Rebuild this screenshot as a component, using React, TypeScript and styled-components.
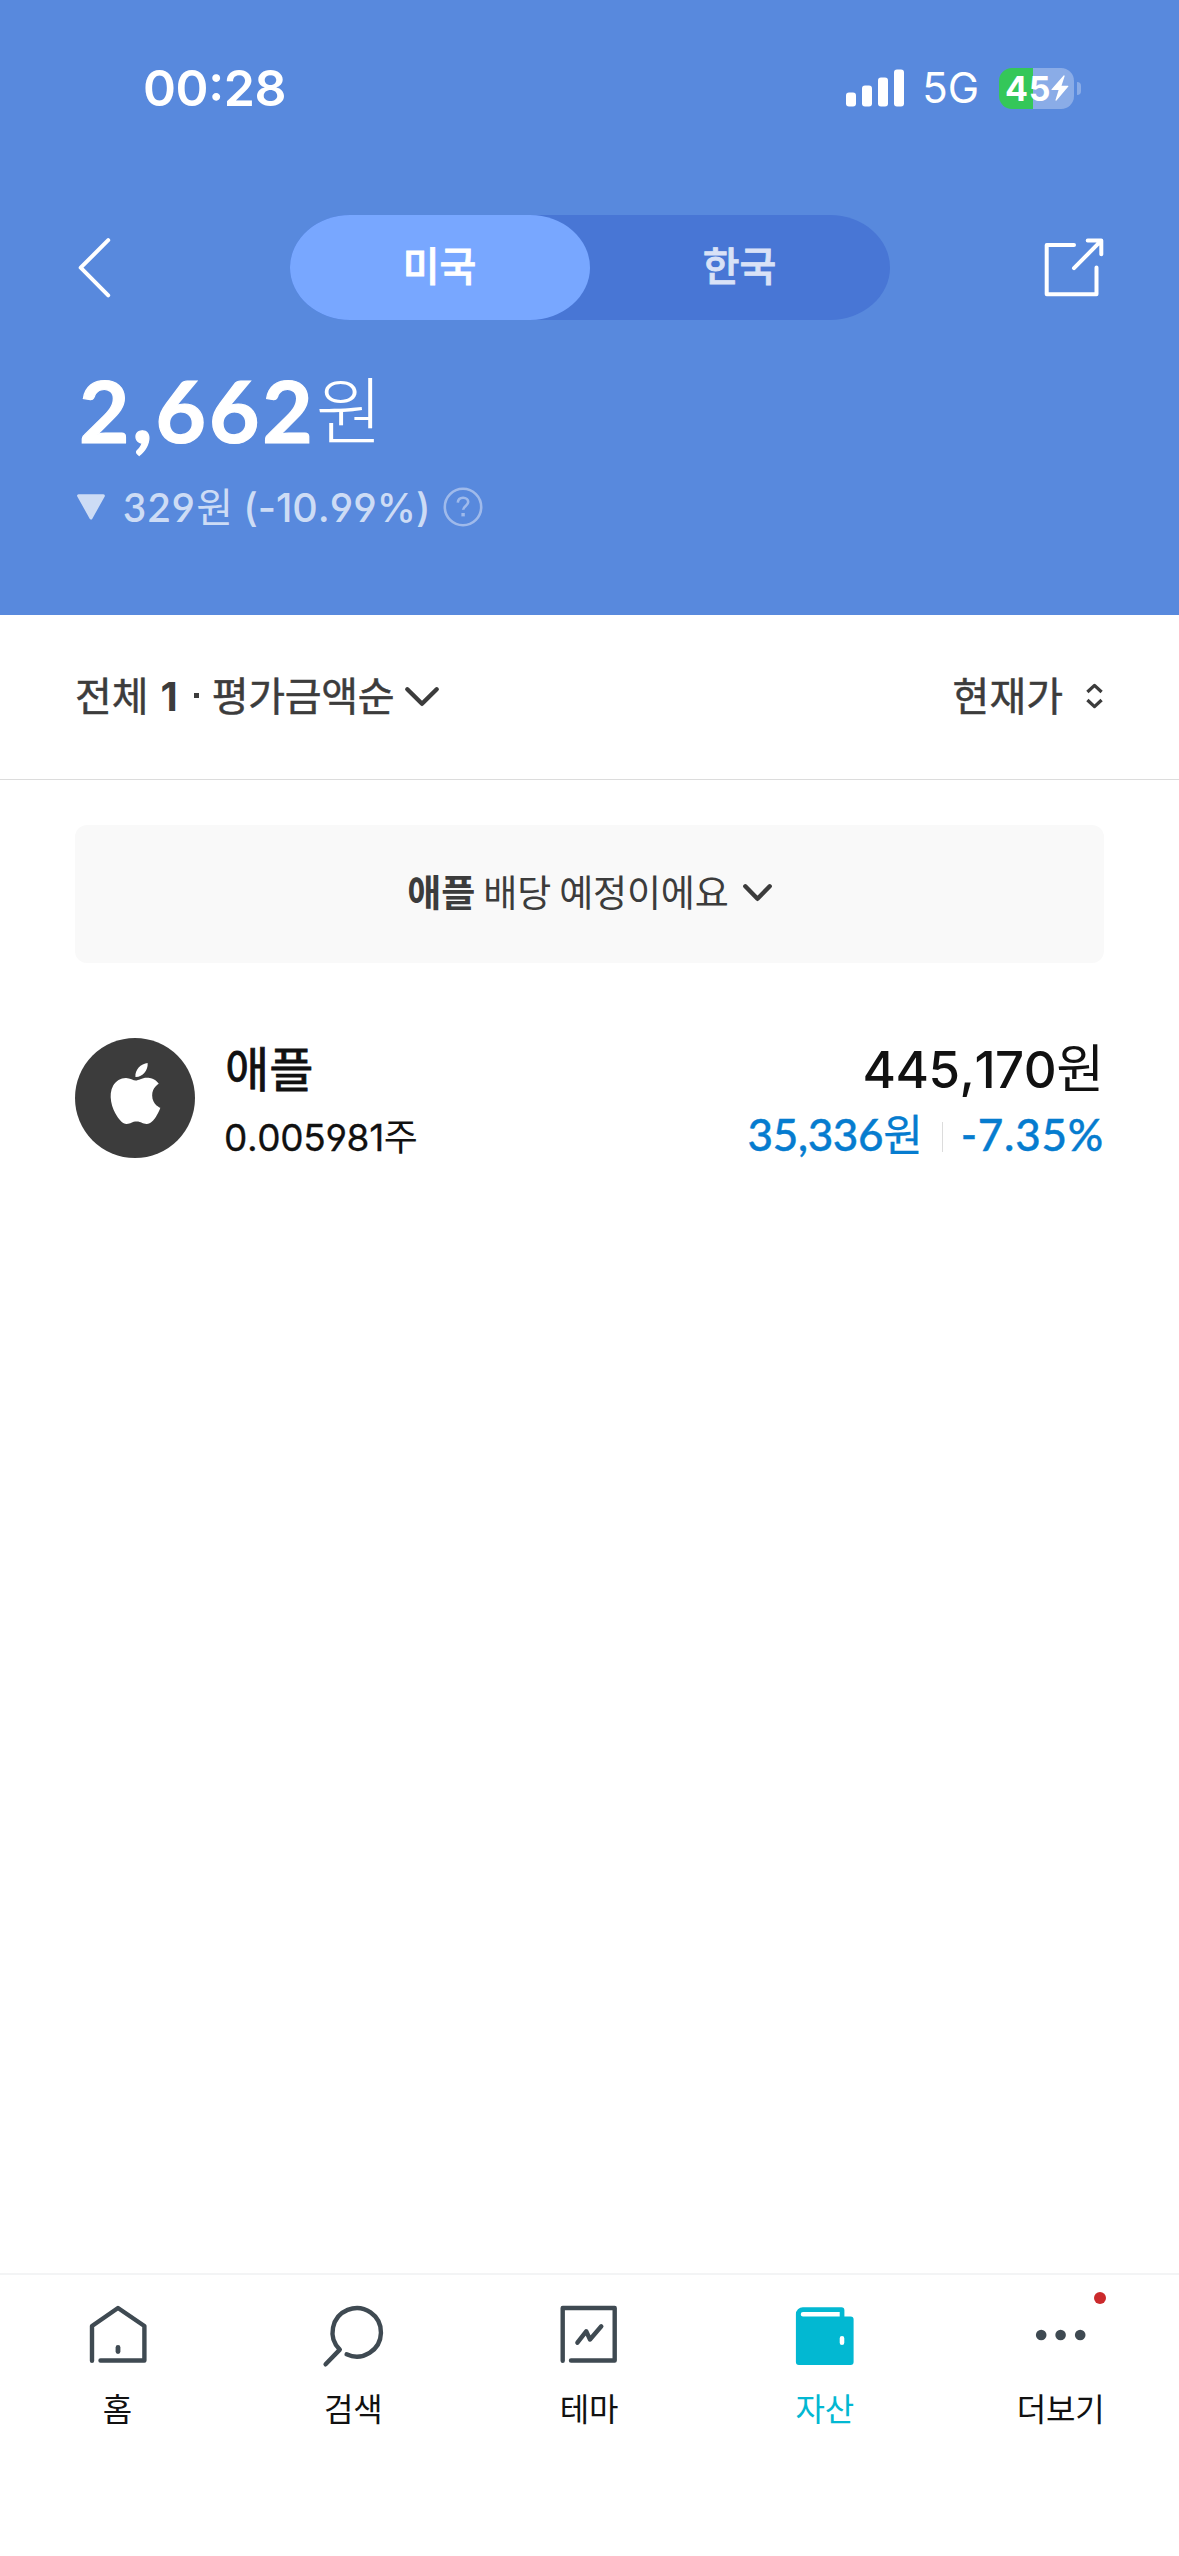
import React from 'react';
import styled, { createGlobalStyle } from 'styled-components';
import { SiApple } from 'react-icons/si';

const KO = '"Noto Sans CJK KR", sans-serif';
const ROUND = 'Lato, "Noto Sans CJK KR", sans-serif';
const GROTESK = 'Inter, "Noto Sans CJK KR", sans-serif';

const GlobalStyle = createGlobalStyle`
  * { box-sizing: border-box; }
  body { margin: 0; background: #fff; font-family: ${KO}; -webkit-font-smoothing: antialiased; }
  svg { display: block; flex: none; overflow: visible; }
  button { appearance: none; border: 0; padding: 0; margin: 0; background: none; font: inherit; color: inherit; }
`;

const Screen = styled.div`
  display: flex;
  flex-direction: column;
  width: 1179px;
  height: 2556px;
  overflow: hidden;
  background: #fff;
  color: #111;
`;

/* Inline run of text with its own face, kept on the baseline of its line */
const Run = styled.span<{
  $face?: string;
  $size: number;
  $weight?: number;
  $track?: number;
  $raise?: number;
  $bolder?: number;
}>`
  font-family: ${p => p.$face ?? KO};
  font-size: ${p => p.$size}px;
  font-weight: ${p => p.$weight ?? 400};
  letter-spacing: ${p => p.$track ?? 0}px;
  line-height: 0;
  vertical-align: ${p => p.$raise ?? 0}px;
  font-kerning: ${p => (p.$face === GROTESK ? 'none' : 'auto')};
  font-feature-settings: 'cv03', 'cv04';
  -webkit-text-stroke: ${p => p.$bolder ?? 0}px currentColor;
`;

const Header = styled.header`
  display: flex;
  flex-direction: column;
  flex: none;
  height: 615px;
  background: #5889dd;
  color: #fff;
`;

const StatusBar = styled.div`
  display: flex;
  justify-content: space-between;
  height: 215px;
  padding: 58px 98px 0 143px;
`;

const Clock = styled.div`
  font: 600 50px/60px ${GROTESK};
  letter-spacing: -0.4px;
  font-feature-settings: 'case';
`;

const StatusIcons = styled.div`
  display: flex;
  align-items: center;
  height: 60px;
`;

const Network = styled.span`
  margin: 0 20px 0 18px;
  font: 400 42px/62px ${GROTESK};
`;

const Battery = styled.div`
  display: flex;
  align-items: center;
  width: 75px;
  height: 41px;
  padding-left: 6px;
  border-radius: 13px;
  background: linear-gradient(90deg, #34c759 34px, #8aace7 34px);
`;

const BatteryLevel = styled.span`
  font: 700 34px/41px ${GROTESK};
  letter-spacing: 0.8px;
`;

const BatteryTip = styled.i`
  width: 4px;
  height: 13px;
  margin-left: 3px;
  border-radius: 0 5px 5px 0;
  background: #8aace7;
`;

const Toolbar = styled.div`
  display: flex;
  align-items: center;
  justify-content: space-between;
  height: 105px;
  padding: 0 75px;
`;

const Segments = styled.div`
  display: flex;
  width: 600px;
  height: 105px;
  border-radius: 60px / 52.5px;
  background: #4876d5;
`;

const Segment = styled.button<{ $active?: boolean }>`
  flex: 1;
  padding-bottom: 7px;
  border-radius: 60px / 52.5px;
  background: ${p => (p.$active ? '#78a7ff' : 'transparent')};
  color: ${p => (p.$active ? '#fff' : '#d9e2f7')};
  font: 500 40px/60px ${KO};
  -webkit-text-stroke: 0.8px currentColor;
`;

const Total = styled.div`
  height: 100px;
  margin: 40px 0 0 79px;
  font: 700 87px/100px ${ROUND};
`;

const Change = styled.div`
  display: flex;
  align-items: center;
  height: 50px;
  margin: 22px 0 0 76px;
  color: #cddcf5;
`;

const ChangeText = styled.div`
  margin: 0 13px 0 17px;
  font: 500 40px/50px ${ROUND};
  white-space: pre;
`;

const FilterBar = styled.div`
  display: flex;
  flex: none;
  align-items: center;
  justify-content: space-between;
  height: 165px;
  padding: 0 75px 6px;
  border-bottom: 1px solid #dcdcdc;
  color: #3c3c3c;
  font: 400 40px/60px ${KO};
  -webkit-text-stroke: 0.5px currentColor;
`;

const FilterGroup = styled.button`
  display: flex;
  align-items: center;
`;

const Count = styled.span`
  margin: 0 16px 0 12px;
  padding-top: 6px;
  font: 700 40px/60px ${GROTESK};
  -webkit-text-stroke: 0;
`;

const Dot = styled.i`
  width: 5px;
  height: 5px;
  margin: 3px 13px 0 0;
  background: #3c3c3c;
`;

const SortLabel = styled.span`
  letter-spacing: -0.3px;
`;

const IconSlot = styled.span<{ $gap: number; $drop: number }>`
  display: block;
  margin-left: ${p => p.$gap}px;
  padding-top: ${p => p.$drop}px;
`;

const Content = styled.main`
  flex: 1;
  padding: 45px 75px 0;
`;

const Banner = styled.button`
  display: flex;
  align-items: center;
  justify-content: center;
  width: 1029px;
  height: 138px;
  padding-bottom: 6px;
  border-radius: 12px;
  background: #f9f9f9;
  color: #3c3c3c;
  font: 400 37px/50px ${KO};
  letter-spacing: -0.15px;
`;

const Holding = styled.div`
  display: flex;
  margin-top: 75px;
`;

const Logo = styled.div`
  display: flex;
  align-items: center;
  justify-content: center;
  width: 120px;
  height: 120px;
  padding-bottom: 9px;
  border-radius: 50%;
  background: #3c3c3c;
  color: #fff;
`;

const HoldingInfo = styled.div`
  flex: 1;
  margin: -2px 0 0 30px;
`;

const Name = styled.div`
  font: 400 48px/60px ${KO};
  -webkit-text-stroke: 0.8px currentColor;
`;

const Shares = styled.div`
  margin: 17px 0 0 -1px;
  font: 500 37px/50px ${GROTESK};
`;

const Figures = styled.div`
  display: flex;
  flex-direction: column;
  align-items: flex-end;
  padding-top: 2px;
`;

const Price = styled.div`
  font: 500 51px/60px ${GROTESK};
`;

const ProfitLine = styled.div`
  display: flex;
  align-items: center;
  height: 50px;
  margin-top: 9px;
  color: #067ccf;
  font: 500 44px/50px ${ROUND};
`;

const Divider = styled.i`
  width: 1px;
  height: 30px;
  margin: 6px 18px 0 19px;
  background: #dcdcdc;
`;

const TabBar = styled.nav`
  display: flex;
  flex: none;
  height: 283px;
  padding-top: 23px;
  border-top: 2px solid #f3f4f5;
`;

const Tab = styled.button<{ $active?: boolean }>`
  display: flex;
  flex: 1;
  flex-direction: column;
  align-items: center;
  justify-content: flex-start;
  gap: 21px;
  color: ${p => (p.$active ? '#02b8d2' : '#111')};
  font: 400 32px/32px ${KO};
`;

const TabLabel = styled.span`
  padding-right: 1px;
  letter-spacing: -0.2px;
`;

const TabIcon = styled.div`
  position: relative;
  width: 72px;
  height: 72px;
`;

const Badge = styled.i`
  position: absolute;
  top: -6px;
  left: 69px;
  width: 12px;
  height: 12px;
  border-radius: 50%;
  background: #cb2a2c;
`;

const stroke = { fill: 'none', strokeLinecap: 'round', strokeLinejoin: 'round' } as const;

const SignalIcon = () => (
  <svg width="58" height="38" viewBox="0 0 58 38" fill="#fff">
    <rect x="0" y="23.5" width="10" height="14" rx="3" />
    <rect x="16" y="16.5" width="10" height="21" rx="3" />
    <rect x="32" y="8.5" width="10" height="29" rx="3" />
    <rect x="48" y="0.5" width="10" height="37" rx="3" />
  </svg>
);

const BoltIcon = () => (
  <svg width="18" height="26" viewBox="0 0 18 26" fill="#fff">
    <path d="M12.6 0.4 0.6 14.2q-.6.9.4.9h6.6L4.4 25.2q.4.8 1.1.2L17.3 11.6q.6-.9-.4-.9h-6.4L13.7.9q-.3-.9-1.1-.5z" />
  </svg>
);

const BackIcon = () => (
  <svg width="60" height="60" viewBox="0 0 60 60" stroke="#fff" strokeWidth="4" {...stroke}>
    <path d="M33.2 2.2 5.7 29.7l27.5 27.6" />
  </svg>
);

const ExportIcon = () => (
  <svg width="60" height="60" viewBox="0 0 60 60" stroke="#fff" strokeWidth="4" {...stroke}>
    <path d="M30 7H2.7v49.3h49.8V29.5" />
    <path d="M30 30.2 57.2 2.6M43.7 2.6h13.6v13.6" />
  </svg>
);

const DownTriangle = () => (
  <svg width="30" height="30" viewBox="0 0 30 30" fill="#cddcf5" stroke="#cddcf5" strokeWidth="3" strokeLinejoin="round">
    <path d="M2.6 3.7h24.8L15 26z" />
  </svg>
);

const HelpIcon = () => (
  <svg width="40" height="40" viewBox="0 0 40 40" stroke="#9fbaeb" strokeWidth="2.6" {...stroke}>
    <circle cx="20" cy="20" r="18.2" />
    <path d="M14.8 15.6c.2-3 2.2-4.9 5.3-4.9 3 0 5.1 1.8 5.1 4.4 0 3.8-5 3.9-5 7.7" strokeLinecap="butt" />
    <rect x="18.4" y="26" width="3.4" height="3.4" fill="#9fbaeb" stroke="none" />
  </svg>
);

const ChevronDown = ({ width, height }: { width: number; height: number }) => (
  <svg width={width} height={height} viewBox={`0 0 ${width} ${height}`} stroke="#3c3c3c" strokeWidth="4.4" {...stroke}>
    <path d={`M2.3 2.3 ${width / 2} ${height - 3.2} ${width - 2.3} 2.3`} />
  </svg>
);

const SortIcon = () => (
  <svg width="18" height="28" viewBox="0 0 18 28" stroke="#3c3c3c" strokeWidth="3.3" {...stroke} strokeLinecap="butt">
    <path d="M1.4 10 8.5 3.4 15.6 10M1.4 18 8.5 24.6 15.6 18" />
  </svg>
);

const HomeIcon = () => (
  <svg width="72" height="72" viewBox="0 0 72 72" stroke="#3f4a52" strokeWidth="4.4" {...stroke}>
    <path d="M10 62.8V28L36 10l26.4 18v34.5H18.5" />
    <path d="M36 49.5v4" strokeWidth="4.8" />
  </svg>
);

const SearchIcon = () => (
  <svg width="72" height="72" viewBox="0 0 72 72" stroke="#3f4a52" strokeWidth="4.4" {...stroke}>
    <path d="M7.6 66.3 21.8 51.6A24.2 24.2 0 1 1 28.6 56.3" />
  </svg>
);

const ThemeIcon = () => (
  <svg width="72" height="72" viewBox="0 0 72 72" stroke="#3f4a52" strokeWidth="4.4" {...stroke}>
    <path d="M9.7 62.8V10h52v52.5H18" />
    <path d="M24.4 44.7 33.2 33.3 37 41.5 48.3 28.3" />
  </svg>
);

const WalletIcon = () => (
  <svg width="72" height="72" viewBox="0 0 72 72" fill="#02b8d2">
    <path
      fillRule="evenodd"
      d="M13.9 9.3H52.4a3 3 0 0 1 3 3V18.5H61.6a3 3 0 0 1 3 3V64a3 3 0 0 1-3 3H9.9a3 3 0 0 1-3-3V16.3a7 7 0 0 1 7-7zM14 14a2.2 2.2 0 0 0 0 4.5H50.7V14zM53 38a2.3 2.3 0 0 0-2.3 2.3V44.7a2.3 2.3 0 0 0 4.6 0V40.3A2.3 2.3 0 0 0 53 38z"
    />
  </svg>
);

const MoreIcon = () => (
  <svg width="72" height="72" viewBox="0 0 72 72" fill="#3f4a52">
    <circle cx="16.2" cy="37" r="5.3" />
    <circle cx="35.6" cy="37" r="5.3" />
    <circle cx="55.2" cy="37" r="5.3" />
  </svg>
);

const tabs = [
  { label: '홈', Icon: HomeIcon },
  { label: '검색', Icon: SearchIcon },
  { label: '테마', Icon: ThemeIcon },
  { label: '자산', Icon: WalletIcon, active: true },
  { label: '더보기', Icon: MoreIcon, badge: true },
];

export default function App() {
  return (
    <Screen>
      <GlobalStyle />
      <Header>
        <StatusBar>
          <Clock>00:28</Clock>
          <StatusIcons>
            <SignalIcon />
            <Network>5G</Network>
            <Battery>
              <BatteryLevel>45</BatteryLevel>
              <BoltIcon />
            </Battery>
            <BatteryTip />
          </StatusIcons>
        </StatusBar>
        <Toolbar>
          <BackIcon />
          <Segments>
            <Segment $active>미국</Segment>
            <Segment>한국</Segment>
          </Segments>
          <ExportIcon />
        </Toolbar>
        <Total>
          <Run $face={ROUND} $size={87} $weight={700} $track={2.9} $bolder={1.2}>2,662</Run>
          <Run $size={73} $weight={300} $raise={5.5}>원</Run>
        </Total>
        <Change>
          <DownTriangle />
          <ChangeText>
            <Run $face={ROUND} $size={40} $weight={600} $track={1.2}>329</Run>
            <Run $size={40}>원</Run>
            {' '}
            <Run $face={GROTESK} $size={39.5} $weight={500}>(-10.99%)</Run>
          </ChangeText>
          <HelpIcon />
        </Change>
      </Header>

      <FilterBar>
        <FilterGroup>
          전체
          <Count>1</Count>
          <Dot />
          <SortLabel>평가금액순</SortLabel>
          <IconSlot $gap={11} $drop={5}>
            <ChevronDown width={34} height={20} />
          </IconSlot>
        </FilterGroup>
        <FilterGroup>
          현재가
          <IconSlot $gap={23} $drop={3}>
            <SortIcon />
          </IconSlot>
        </FilterGroup>
      </FilterBar>

      <Content>
        <Banner>
          <span><b>애플</b> 배당 예정이에요</span>
          <IconSlot $gap={14} $drop={4}>
            <ChevronDown width={29} height={18} />
          </IconSlot>
        </Banner>
        <Holding>
          <Logo><SiApple size={61} /></Logo>
          <HoldingInfo>
            <Name>애플</Name>
            <Shares>
              <Run $face={GROTESK} $size={37} $weight={400} $track={-0.35} $bolder={0.3}>0.005981</Run>
              <Run $size={37}>주</Run>
            </Shares>
          </HoldingInfo>
          <Figures>
            <Price>
              <Run $face={GROTESK} $size={51} $weight={450} $track={-0.5}>445,170</Run>
              <Run $size={52}>원</Run>
            </Price>
            <ProfitLine>
              <span>
                <Run $face={ROUND} $size={44} $weight={500} $track={-0.35} $bolder={0.4}>35,336</Run>
                <Run $size={43} $bolder={0.3}>원</Run>
              </span>
              <Divider />
              <Run $face={ROUND} $size={44} $weight={500} $track={0.75} $bolder={0.4}>-7.35%</Run>
            </ProfitLine>
          </Figures>
        </Holding>
      </Content>

      <TabBar>
        {tabs.map(({ label, Icon, active, badge }) => (
          <Tab key={label} $active={active}>
            <TabIcon>
              <Icon />
              {badge && <Badge />}
            </TabIcon>
            <TabLabel>{label}</TabLabel>
          </Tab>
        ))}
      </TabBar>
    </Screen>
  );
}
